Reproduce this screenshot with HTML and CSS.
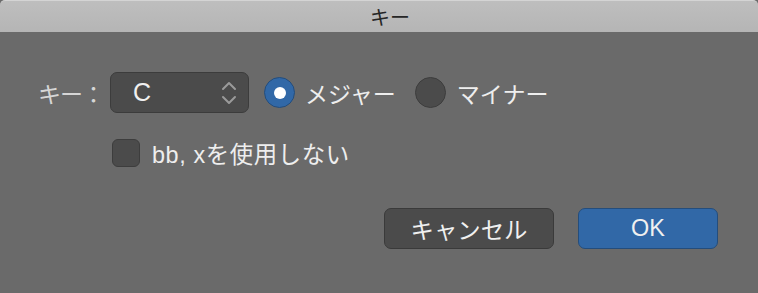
FILE: index.html
```html
<!DOCTYPE html>
<html lang="ja">
<head>
<meta charset="utf-8">
<link rel="stylesheet" href="styles.css">
</head>
<body>
<div class="window">
  <div class="titlebar">キー</div>
  <div class="content">
    <div class="row key-row">
      <span class="label">キー：</span>
      <div class="popup">
        <span class="popup-value">C</span>
        <svg class="popup-arrows" width="16" height="26" viewBox="0 0 16 26">
          <path d="M2 9 L8 3 L14 9" fill="none" stroke="#9a9a9a" stroke-width="2" stroke-linecap="round" stroke-linejoin="round"/>
          <path d="M2 17 L8 23 L14 17" fill="none" stroke="#9a9a9a" stroke-width="2" stroke-linecap="round" stroke-linejoin="round"/>
        </svg>
      </div>
      <label class="radio-item">
        <span class="radio checked"><span class="dot"></span></span>
        <span class="opt-text">メジャー</span>
      </label>
      <label class="radio-item">
        <span class="radio"></span>
        <span class="opt-text">マイナー</span>
      </label>
    </div>
    <div class="row check-row">
      <span class="checkbox"></span>
      <span class="opt-text check-text">bb, xを使用しない</span>
    </div>
    <div class="buttons">
      <button class="btn cancel">キャンセル</button>
      <button class="btn ok">OK</button>
    </div>
  </div>
</div>
</body>
</html>
```
FILE: styles.css
```css
html, body {
  margin: 0;
  padding: 0;
}
body {
  width: 758px;
  height: 293px;
  background: #6a6a6a;
  font-family: "Liberation Sans", "Noto Sans CJK JP", sans-serif;
  overflow: hidden;
}
.window {
  display: flex;
  flex-direction: column;
  height: 293px;
}
.titlebar {
  height: 32px;
  box-sizing: border-box;
  border-top: 1px solid #d4d4d4;
  background: linear-gradient(#bebebe, #b5b5b5);
  color: #262626;
  font-size: 20px;
  display: flex;
  align-items: center;
  justify-content: center;
  padding-left: 22px;
  border-radius: 5px 5px 0 0;
}
.content {
  padding: 40px 40px 0 38px;
  display: flex;
  flex-direction: column;
}
.row {
  display: flex;
  align-items: center;
}
.key-row {
  height: 41px;
}
.label {
  color: #d6d6d6;
  font-size: 23px;
  width: 72px;
  letter-spacing: -1px;
}
.popup {
  width: 139px;
  height: 41px;
  box-sizing: border-box;
  background: #4b4b4b;
  border: 1px solid #3c3c3c;
  border-radius: 7px;
  display: flex;
  align-items: center;
  justify-content: space-between;
  padding: 0 11px 0 22px;
}
.popup-value {
  color: #f0f0f0;
  font-size: 25px;
}
.radio-item {
  display: flex;
  align-items: center;
  margin-left: 15px;
}
.radio-item + .radio-item {
  margin-left: 19px;
}
.radio {
  width: 31px;
  height: 31px;
  box-sizing: border-box;
  border-radius: 50%;
  background: #4b4b4b;
  border: 1px solid #3d3d3d;
  display: flex;
  align-items: center;
  justify-content: center;
}
.radio.checked {
  background: #3168a7;
  border-color: #244d7c;
}
.dot {
  width: 12px;
  height: 12px;
  border-radius: 50%;
  background: #ffffff;
}
.opt-text {
  color: #eeeeee;
  font-size: 23px;
  margin-left: 10px;
}
.radio-item + .radio-item .opt-text {
  margin-left: 11px;
}
.check-row {
  margin-top: 23px;
  padding-left: 74px;
}
.checkbox {
  width: 28px;
  height: 28px;
  box-sizing: border-box;
  border-radius: 6px;
  background: #4b4b4b;
  border: 1px solid #3d3d3d;
}
.check-row .check-text {
  margin-left: 12px;
  font-size: 23.4px;
  letter-spacing: 0.6px;
}
.buttons {
  display: flex;
  justify-content: flex-end;
  gap: 24px;
  margin-top: 38px;
}
.btn {
  height: 41px;
  border-radius: 7px;
  font-family: "Liberation Sans", "Noto Sans CJK JP", sans-serif;
  font-size: 23.4px;
  color: #f0f0f0;
  padding: 0;
}
.cancel {
  width: 170px;
  background: #4b4b4b;
  border: 1px solid #3a3a3a;
}
.ok {
  width: 140px;
  background: #3168a7;
  border: 1px solid #244d7c;
}
```
